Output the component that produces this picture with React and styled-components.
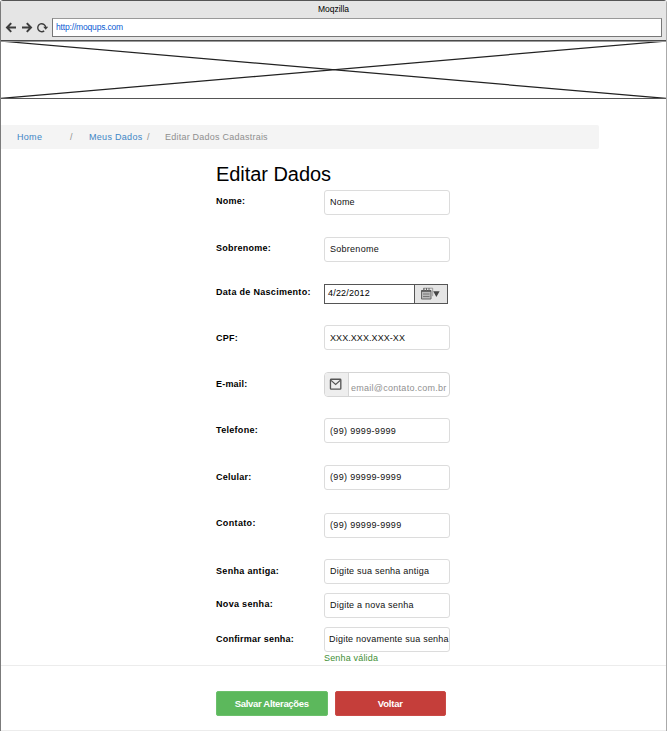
import React from "react";
import styled, { createGlobalStyle } from "styled-components";

const GlobalStyle = createGlobalStyle`
  * { box-sizing: border-box; }
  body { margin: 0; background: #fff; font-family: "Liberation Sans", Arial, sans-serif; font-size: 9px; color: #000; }
`;

const Window = styled.div`
  width: 667px;
  height: 731px;
  overflow: hidden;
  border-left: 1px solid #7b7b7b;
  border-right: 1px solid #aaa;
  border-radius: 3px 3px 0 0;
  background: #fff;
`;

const Chrome = styled.header`
  height: 42px;
  background: #e5e5e5;
  border-top: 1px solid #555;
  border-bottom: 1px solid #999;
  box-shadow: inset 0 -1px 0 #4a4a4a;
`;

const WindowTitle = styled.div`
  height: 17px;
  line-height: 16px;
  text-align: center;
  font-size: 8.5px;
  letter-spacing: ${(p) => p.$spacing}px;
`;

const Toolbar = styled.div`
  display: flex;
  height: 19px;
  padding: 0 4px 0 4px;
  align-items: center;
`;

const NavIcons = styled.svg`
  width: 47px;
  height: 19px;
  flex: none;
`;

const AddressBar = styled.div`
  flex: 1;
  height: 19px;
  border: 1px solid #777;
  border-top-color: #999;
  background: #fff;
  color: #0b5bd3;
  padding-left: 3px;
  line-height: 16px;
  font-size: 8.5px;
  letter-spacing: -0.17px;
`;

const Banner = styled.svg`
  display: block;
  width: 667px;
  height: 57px;
  margin-left: -1px;
`;

const Breadcrumb = styled.nav`
  display: flex;
  width: 598px;
  height: 24px;
  margin-top: 26px;
  padding-left: 16px;
  align-items: center;
  border-radius: 0 2px 2px 0;
  background: #f4f4f4;
`;

const Crumb = styled.span`
  width: ${(p) => p.$w}px;
  white-space: nowrap;
  letter-spacing: ${(p) => p.$spacing || 0}px;
  color: ${(p) => (p.$link ? "#3f86c6" : "#8f8f8f")};
`;

const Title = styled.h1`
  margin: 13px 0 0 215px;
  height: 28px;
  font-size: 20px;
  font-weight: 400;
  line-height: 24px;
  letter-spacing: -0.05px;
`;

const Form = styled.form`
  height: 476px;
  padding-left: 215px;
  border-bottom: 1px solid #ececec;
`;

const Row = styled.div`
  display: grid;
  grid-template-columns: 108px 126px;
  height: ${(p) => p.$h}px;
  align-items: start;
`;

const Label = styled.label`
  padding-top: ${(p) => p.$top}px;
  font-weight: 700;
  line-height: 12px;
  white-space: nowrap;
  letter-spacing: ${(p) => p.$spacing}px;
`;

const Field = styled.div`
  height: 25px;
  padding: ${(p) => p.$top}px 0 0 ${(p) => p.$left}px;
  border: 1px solid #dcdcdc;
  border-radius: 3px;
  line-height: 12px;
  white-space: nowrap;
  letter-spacing: ${(p) => p.$spacing}px;
  color: #111;
`;

const DateField = styled.div`
  display: flex;
  width: 124px;
  height: 20px;
  border: 1px solid #555;
  line-height: 17px;
  padding-left: 3px;
  letter-spacing: 0.2px;
  justify-content: space-between;
`;

const DateButton = styled.span`
  display: flex;
  width: 33px;
  height: 18px;
  border-left: 1px solid #555;
  background: #e5e5e5;
`;

const EmailField = styled.div`
  display: flex;
  height: 25px;
  border: 1px solid #d5d5d5;
  border-radius: 4px;
  overflow: hidden;
  color: #909090;
`;

const Addon = styled.span`
  display: flex;
  width: 24px;
  flex: none;
  border-right: 1px solid #d5d5d5;
  background: #eee;
`;

const EmailText = styled.span`
  padding: 9px 0 0 2px;
  line-height: 12px;
  letter-spacing: 0.27px;
`;

const Hint = styled.p`
  margin: 0 0 0 108px;
  line-height: 12px;
  letter-spacing: 0.17px;
  color: #3f8f35;
`;

const Actions = styled.footer`
  display: flex;
  gap: 7px;
  height: 65px;
  padding: 25px 0 0 215px;
  border-bottom: 1px solid #ececec;
`;

const Button = styled.button`
  width: 111.5px;
  height: 25px;
  padding: 0 0 1px;
  border: 1px solid ${(p) => (p.$danger ? "#ca4a46" : "#6cc06c")};
  border-radius: 2px;
  background: ${(p) => (p.$danger ? "#c53e3a" : "#5cb85c")};
  color: #fff;
  font: 700 9.5px "Liberation Sans", Arial, sans-serif;
  letter-spacing: ${(p) => p.$spacing}px;
`;

const CalendarIcon = () => (
  <svg width="32" height="18" viewBox="0 0 32 18">
    <path d="M8.5 5V3.2h9.2v8" fill="none" stroke="#888" strokeWidth=".8" />
    <path d="M6.5 5.5h9.5v8.5h-9.5z" fill="#bbb" stroke="#666" />
    <path d="M6.5 6h9.5" stroke="#555" strokeWidth="1.6" />
    <path d="M9 3v3M11.5 3v3M14 3v3" stroke="#666" />
    <path d="M8 9h6.5M8 11.5h6.5" stroke="#777" />
    <path d="M18.2 6.3h6.4l-3.2 5.6z" fill="#444" />
  </svg>
);

const MailIcon = () => (
  <svg width="24" height="23" viewBox="0 0 24 23">
    <rect x="5.7" y="6" width="10.8" height="10.4" rx=".8" fill="none" stroke="#555" strokeWidth="1.4" />
    <path d="M6.3 7.2l4.8 4.3 4.8-4.3" fill="none" stroke="#555" strokeWidth="1.3" />
  </svg>
);

const rows = [
  { label: "Nome:", h: 47, lt: 5, ls: 0.25, value: "Nome", vt: 5, vs: 0.2 },
  { label: "Sobrenome:", h: 47, lt: 5, ls: 0.25, value: "Sobrenome", vt: 5, vs: 0.27 },
  { label: "Data de Nascimento:", h: 41, lt: 2, ls: 0.3, kind: "date", value: "4/22/2012" },
  { label: "CPF:", h: 47, lt: 7, ls: 0.25, value: "XXX.XXX.XXX-XX", vt: 6, vs: 0.07 },
  { label: "E-mail:", h: 46, lt: 6, ls: 0.2, kind: "email", value: "email@contato.com.br" },
  { label: "Telefone:", h: 47, lt: 6, ls: 0.3, value: "(99) 9999-9999", vt: 6, vs: 0.33 },
  { label: "Celular:", h: 48, lt: 6, ls: 0.25, value: "(99) 99999-9999", vt: 5, vs: 0.33 },
  { label: "Contato:", h: 46, lt: 4, ls: 0.35, value: "(99) 99999-9999", vt: 5, vs: 0.33 },
  { label: "Senha antiga:", h: 34, lt: 6, ls: 0.32, value: "Digite sua senha antiga", vt: 5, vs: 0.22 },
  { label: "Nova senha:", h: 34, lt: 5, ls: 0.32, value: "Digite a nova senha", vt: 5, vs: 0.22 },
  { label: "Confirmar senha:", h: 25, lt: 6, ls: 0.22, value: "Digite novamente sua senha", vt: 5, vl: 4, vs: 0.22 },
];

function Control({ row }) {
  if (row.kind === "date")
    return (
      <DateField>
        {row.value}
        <DateButton><CalendarIcon /></DateButton>
      </DateField>
    );
  if (row.kind === "email")
    return (
      <EmailField>
        <Addon><MailIcon /></Addon>
        <EmailText>{row.value}</EmailText>
      </EmailField>
    );
  return (
    <Field $top={row.vt} $left={row.vl || 5} $spacing={row.vs}>{row.value}</Field>
  );
}

export default function App() {
  return (
    <>
      <GlobalStyle />
      <Window>
        <Chrome>
          <WindowTitle $spacing={0}>Moqzilla</WindowTitle>
          <Toolbar>
            <NavIcons viewBox="0 0 47 19" fill="none" stroke="#3d3d3d" strokeWidth="2">
              <path d="M11 9.5H2.6M6.2 5.1L2 9.5l4.2 4.4" />
              <path d="M17 9.5h8.6M21.8 5.1l4.2 4.4-4.2 4.4" />
              <path d="M39.2 12.9a4 4 0 1 1 1.5-3.8" strokeWidth="1.4" />
              <path d="M38.2 8.8h5l-2.5 3z" fill="#3d3d3d" stroke="none" />
            </NavIcons>
            <AddressBar>http://moqups.com</AddressBar>
          </Toolbar>
        </Chrome>
        <Banner viewBox="0 0 667 57" fill="none" stroke="#222" strokeWidth="1.2">
          <path d="M0-1L667 56.5M0 56.5L667-1" />
          <path d="M0 56.5h667" stroke="#555" strokeWidth="1" />
        </Banner>
        <Breadcrumb>
          <Crumb $link $w={53} $spacing={0.3}>Home</Crumb>
          <Crumb $w={19}>/</Crumb>
          <Crumb $link $w={58} $spacing={0.3}>Meus Dados</Crumb>
          <Crumb $w={18}>/</Crumb>
          <Crumb $w={110} $spacing={0.23}>Editar Dados Cadastrais</Crumb>
        </Breadcrumb>
        <Title>Editar Dados</Title>
        <Form>
          {rows.map((row) => (
            <Row key={row.label} $h={row.h}>
              <Label $top={row.lt} $spacing={row.ls}>{row.label}</Label>
              <Control row={row} />
            </Row>
          ))}
          <Hint>Senha válida</Hint>
        </Form>
        <Actions>
          <Button type="button" $spacing={-0.32}>Salvar Alterações</Button>
          <Button type="button" $danger $spacing={-0.2}>Voltar</Button>
        </Actions>
      </Window>
    </>
  );
}
